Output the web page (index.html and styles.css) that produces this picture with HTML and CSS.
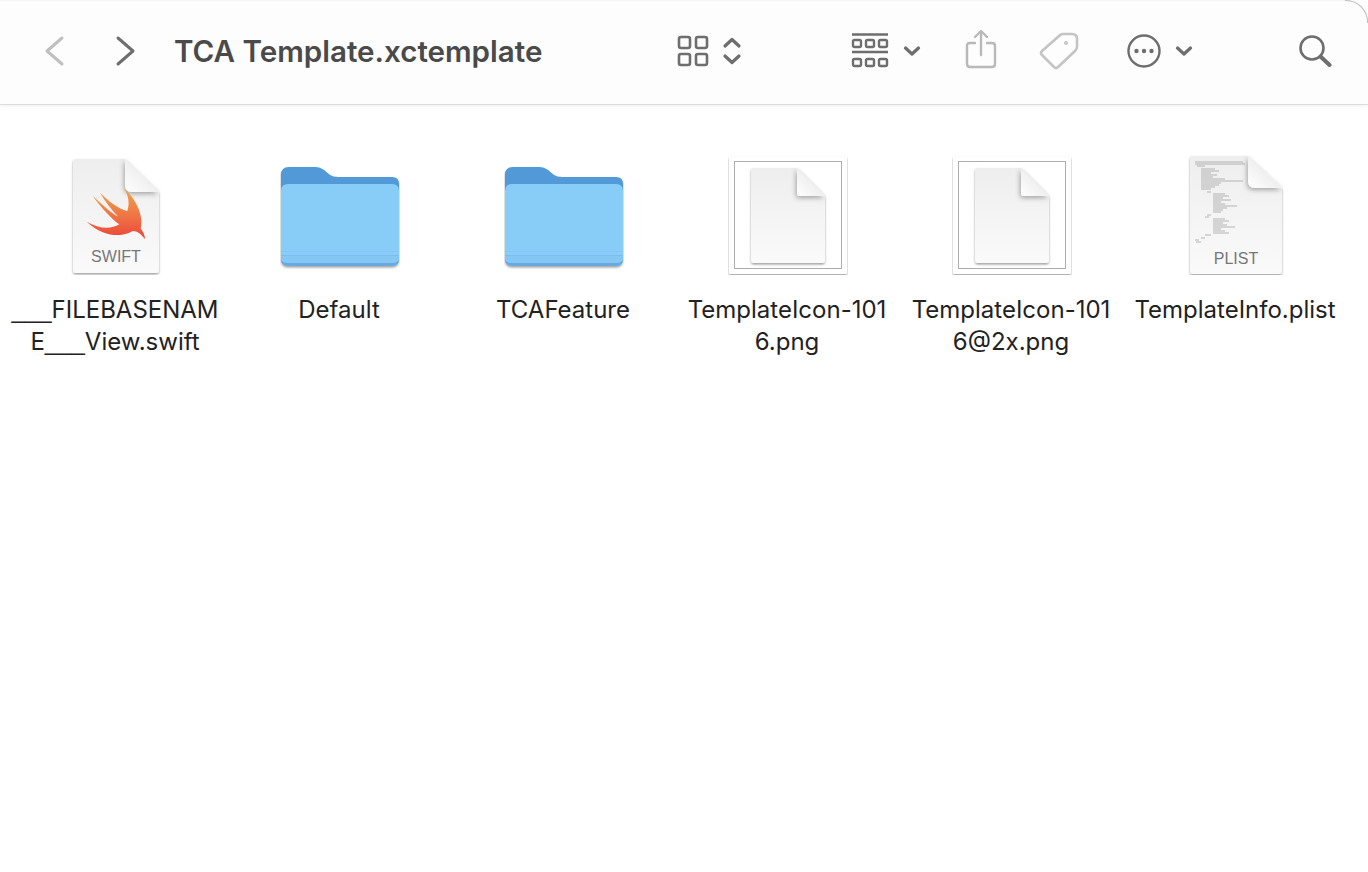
FILE: index.html
```html
<!DOCTYPE html>
<html>
  <head>
    <meta charset="UTF-8">
    <meta name="viewport" content="width=device-width, initial-scale=1.0">
    <title>TCA Template.xctemplate</title>
    <link rel="stylesheet" href="styles.css">
  </head>
  <body>
    <svg class="defs" width="0" height="0">
      <defs>
        <linearGradient id="paper" x1="0" y1="0" x2="0" y2="1">
          <stop offset="0" stop-color="#eeeeee"/>
          <stop offset="1" stop-color="#fafafa"/>
        </linearGradient>
        <linearGradient id="fold" x1="0" y1="1" x2="1" y2="0">
          <stop offset="0" stop-color="#ffffff"/>
          <stop offset="1" stop-color="#e0e0e0"/>
        </linearGradient>
        <linearGradient id="bird" x1="0" y1="0" x2="0" y2="1">
          <stop offset="0" stop-color="#f0a24c"/>
          <stop offset="0.55" stop-color="#ef7445"/>
          <stop offset="1" stop-color="#ec4437"/>
        </linearGradient>
        <filter id="soft" x="-20%" y="-20%" width="140%" height="140%">
          <feDropShadow dx="0" dy="1.5" stdDeviation="1.2" flood-color="#000" flood-opacity="0.38"/>
        </filter>
        <filter id="foldshadow" x="-40%" y="-40%" width="180%" height="180%">
          <feDropShadow dx="-1" dy="2" stdDeviation="2.5" flood-color="#000" flood-opacity="0.32"/>
        </filter>
        <symbol id="folder" viewBox="0 0 120 120">
          <g filter="url(#soft)">
            <path d="M1 20 Q1 12 9 12 L36 12 Q40 12 44 15 L50 20 Q53 22 58 22 L112 22 Q119 22 119 29 L119 104 Q119 111 112 111 L8 111 Q1 111 1 104 Z" fill="#5199d7"/>
          </g>
          <path d="M1 36 Q1 29 8 29 L112 29 Q119 29 119 36 L119 104 Q119 111 112 111 L8 111 Q1 111 1 104 Z" fill="#88ccf8"/>
          <path d="M1 100 L119 100 L119 104 Q119 111 112 111 L8 111 Q1 111 1 104 Z" fill="#84c7f5"/>
          <path d="M1 96 H119 V97 H1 Z" fill="#84c7f5"/>
          <path d="M1 100 H119 V101 H1 Z" fill="#7dbeee"/>
          <path d="M1 103 Q1 111 8 111 L112 111 Q119 111 119 103 Q119 108 112 108 L8 108 Q1 108 1 103 Z" fill="#6aa8dd"/>
        </symbol>
        <symbol id="image" viewBox="0 0 120 120">
          <rect x="1" y="2" width="118" height="117" fill="#fff" filter="url(#soft)"/>
          <rect x="6.5" y="6.5" width="107" height="107" fill="#fff" stroke="#adadad"/>
          <path d="M25 13 L69 13 L97 41 L97 105 Q97 108 94 108 L26 108 Q23 108 23 105 L23 15 Q23 13 25 13 Z" fill="url(#paper)" filter="url(#soft)"/>
          <path d="M69 13 L97 41 L72 41 Q69 41 69 38 Z" fill="url(#fold)" filter="url(#foldshadow)"/>
        </symbol>
      </defs>
    </svg>

    <header class="toolbar">
      <svg class="tb-back" width="22" height="32" viewBox="0 0 22 32"><path d="M19 3 L4 16 L19 29" fill="none" stroke="#bfbfbf" stroke-width="3" stroke-linecap="round" stroke-linejoin="round"/></svg>
      <svg class="tb-forward" width="22" height="32" viewBox="0 0 22 32"><path d="M3 3 L18 16 L3 29" fill="none" stroke="#6e6e6e" stroke-width="3" stroke-linecap="round" stroke-linejoin="round"/></svg>
      <h1 class="title">TCA Template.xctemplate</h1>
      <svg class="tb-grid" width="32" height="32" viewBox="0 0 32 32" fill="none" stroke="#6e6e6e" stroke-width="2.6">
        <rect x="2" y="2" width="11" height="11" rx="2"/><rect x="19" y="2" width="11" height="11" rx="2"/>
        <rect x="2" y="19" width="11" height="11" rx="2"/><rect x="19" y="19" width="11" height="11" rx="2"/>
      </svg>
      <svg class="tb-updown" width="20" height="30" viewBox="0 0 20 30" fill="none" stroke="#6e6e6e" stroke-width="3.2" stroke-linecap="round" stroke-linejoin="round">
        <path d="M3 10 L10 3.5 L17 10"/><path d="M3 20 L10 26.5 L17 20"/>
      </svg>
      <svg class="tb-group" width="38" height="36" viewBox="0 0 38 36" fill="none" stroke="#6e6e6e" stroke-width="2.4">
        <path d="M1 1.5 H37"/><path d="M1 19 H37"/>
        <rect x="2" y="7" width="8" height="7" rx="1.5"/><rect x="15" y="7" width="8" height="7" rx="1.5"/><rect x="28" y="7" width="8" height="7" rx="1.5"/>
        <rect x="2" y="26" width="8" height="7" rx="1.5"/><rect x="15" y="26" width="8" height="7" rx="1.5"/><rect x="28" y="26" width="8" height="7" rx="1.5"/>
      </svg>
      <svg class="tb-chev1" width="18" height="12" viewBox="0 0 18 12"><path d="M2.5 3 L9 9 L15.5 3" fill="none" stroke="#6e6e6e" stroke-width="3.2" stroke-linecap="round" stroke-linejoin="round"/></svg>
      <svg class="tb-share" width="32" height="40" viewBox="0 0 32 40" fill="none" stroke="#b9b9b9" stroke-width="2.4" stroke-linecap="round" stroke-linejoin="round">
        <path d="M10 14 H5 Q2 14 2 17 V35 Q2 38 5 38 H27 Q30 38 30 35 V17 Q30 14 27 14 H22"/>
        <path d="M16 26 V3"/><path d="M10 8 L16 2 L22 8"/>
      </svg>
      <svg class="tb-tag" width="40" height="38" viewBox="0 0 40 38" fill="none" stroke="#c4c4c4" stroke-width="2.6" stroke-linejoin="round">
        <path d="M24 2 H33 Q38 2 38 7 V15 Q38 17 36 19 L19 35 Q17 37 15 35 L3 23 Q1 21 3 19 L20 4 Q22 2 24 2 Z"/>
        <circle cx="27" cy="11" r="2" fill="#c4c4c4" stroke="none"/>
      </svg>
      <svg class="tb-more" width="34" height="34" viewBox="0 0 34 34">
        <circle cx="17" cy="17" r="15.5" fill="none" stroke="#6e6e6e" stroke-width="2.4"/>
        <circle cx="9.5" cy="17" r="2.2" fill="#6e6e6e"/><circle cx="17" cy="17" r="2.2" fill="#6e6e6e"/><circle cx="24.5" cy="17" r="2.2" fill="#6e6e6e"/>
      </svg>
      <svg class="tb-chev2" width="18" height="12" viewBox="0 0 18 12"><path d="M2.5 3 L9 9 L15.5 3" fill="none" stroke="#6e6e6e" stroke-width="3.2" stroke-linecap="round" stroke-linejoin="round"/></svg>
      <svg class="tb-search" width="34" height="34" viewBox="0 0 34 34" fill="none" stroke="#6e6e6e" stroke-linecap="round">
        <circle cx="14" cy="14" r="11.5" stroke-width="2.6"/><path d="M22.5 22.5 L31.5 31" stroke-width="4"/>
      </svg>
    </header>

    <main class="files">
      <div class="file">
        <svg class="icon" width="120" height="120" viewBox="0 0 120 120">
          <path d="M21 4 L70 4 L104 37 L104 115 Q104 118 101 118 L21 118 Q18 118 18 115 L18 7 Q18 4 21 4 Z" fill="url(#paper)" filter="url(#soft)"/>
          <path d="M70 4 L104 37 L77 37 Q70 37 70 30 Z" fill="url(#fold)" filter="url(#foldshadow)"/>
          <g transform="translate(-5,-10) scale(0.3333)">
            <path d="M222 130 C262 165 282 220 272 250 C280 262 285 272 285 283 C275 268 262 258 248 258 C225 272 170 285 110 230 C145 250 180 255 208 238 C185 222 155 190 128 152 C155 178 185 205 205 215 C185 195 165 170 150 143 C175 168 205 192 232 198 C240 175 235 150 222 130 Z" fill="url(#bird)"/>
          </g>
          <text class="doc-label" x="61" y="107">SWIFT</text>
        </svg>
        <div class="name"><span class="under">___</span>FILEBASENAM<br>E<span class="under">___</span>View.swift</div>
      </div>
      <div class="file">
        <svg class="icon icon-nudge" width="120" height="120"><use href="#folder"/></svg>
        <div class="name">Default</div>
      </div>
      <div class="file">
        <svg class="icon icon-nudge" width="120" height="120"><use href="#folder"/></svg>
        <div class="name">TCAFeature</div>
      </div>
      <div class="file">
        <svg class="icon icon-nudge" width="120" height="120"><use href="#image"/></svg>
        <div class="name">TemplateIcon-101<br>6.png</div>
      </div>
      <div class="file">
        <svg class="icon icon-nudge" width="120" height="120"><use href="#image"/></svg>
        <div class="name">TemplateIcon-101<br>6@2x.png</div>
      </div>
      <div class="file">
        <svg class="icon" width="120" height="120" viewBox="0 0 120 120">
          <path d="M17 1 L73 1 L107 33 L107 116 Q107 119 104 119 L18 119 Q15 119 15 116 L15 3 Q15 1 17 1 Z" fill="url(#paper)" filter="url(#soft)"/>
          <path d="M73 1 L107 33 L80 33 Q73 33 73 26 Z" fill="url(#fold)" filter="url(#foldshadow)"/>
          <g class="plist-lines" stroke="#9a9a9a" stroke-width="0.7">
            <path d="M20 7 H68M20 9 H70M22 11 H30"/>
            <path d="M26 14 H40M26 16 H44M26 18 H36M26 20 H42M26 22 H38M26 24 H50M26 26 H68M26 28 H46M26 30 H44M26 32 H40M26 34 H36"/>
            <path d="M32 37 H36"/>
            <path d="M38 39 H50M38 41 H54M38 43 H48M38 45 H56M38 47 H46M38 49 H50M38 51 H62M38 53 H52M38 55 H48M38 57 H46"/>
            <path d="M32 60 H36M30 62 H34"/>
            <path d="M38 64 H50M38 66 H54M38 68 H48M38 70 H52M38 72 H60M38 74 H46M38 76 H50M38 78 H54"/>
            <path d="M30 80 H36M26 83 H30M20 85 H24M21 87 H26"/>
          </g>
          <text class="doc-label" x="61" y="109">PLIST</text>
        </svg>
        <div class="name">TemplateInfo.plist</div>
      </div>
    </main>
  </body>
</html>
```

FILE: styles.css
```css
* {
  box-sizing: border-box;
  margin: 0;
  padding: 0;
}

body {
  font-family: Inter, "Liberation Sans", sans-serif;
  background-color: #fff;
  color: #222;
}

.defs {
  display: block;
  height: 0;
}

.toolbar {
  position: relative;
  display: flex;
  align-items: center;
  height: 105px;
  padding-left: 43px;
  padding-bottom: 3px;
  background-color: #fdfdfd;
  border-top: 1px solid #f6f6f6;
  border-bottom: 1px solid #dcdcdc;
  border-top-right-radius: 22px;
  box-shadow: 0 1px 4px rgba(0, 0, 0, 0.07);
}

/* window corner */
.toolbar::after {
  content: "";
  position: absolute;
  top: -1px;
  right: 0;
  width: 22px;
  height: 22px;
  border-top: 1px solid #bdbdbd;
  border-right: 1px solid #bdbdbd;
  border-top-right-radius: 22px;
}

.title {
  font-size: 29.55px;
  font-weight: 600;
  color: #4a4a4a;
  margin-left: 37px;
  width: 503px;
  white-space: nowrap;
}

.toolbar svg {
  flex: none;
}

.tb-forward { margin-left: 50px; }
.tb-updown { margin-left: 13px; }
.tb-group { margin-left: 109px; }
.tb-chev1 { margin-left: 14px; }
.tb-share { margin-left: 44px; margin-top: -4px; }
.tb-tag { margin-left: 42px; }
.tb-more { margin-left: 48px; }
.tb-chev2 { margin-left: 14px; }
.tb-search { margin-left: 105px; }

.files {
  display: grid;
  grid-template-columns: repeat(6, 224px);
  margin-left: 3px;
  padding-top: 50px;
}

.file {
  display: flex;
  flex-direction: column;
  align-items: center;
}

.icon {
  display: block;
}

.icon-nudge {
  margin-left: 2px;
}

.name {
  margin-top: 19px;
  font-size: 24px;
  line-height: 32px;
  text-align: center;
  white-space: nowrap;
}

.under {
  font-family: "Liberation Sans", Arial, sans-serif;
}

.doc-label {
  font-family: "Liberation Sans", Arial, sans-serif;
  font-size: 16px;
  fill: #777;
  text-anchor: middle;
}
```
